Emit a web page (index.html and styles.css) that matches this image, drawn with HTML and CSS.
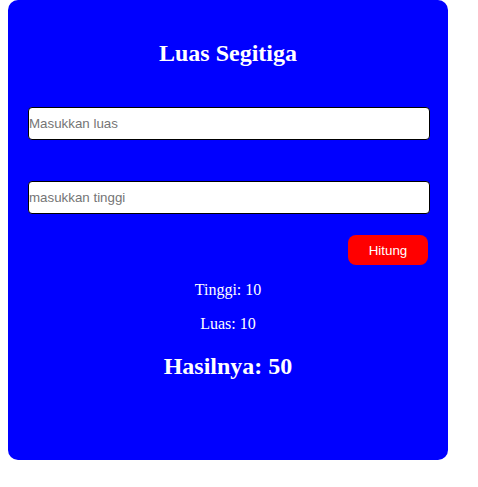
FILE: index.html
```html
<!DOCTYPE html>
<html lang="en">
<head>
    <meta charset="UTF-8">
    <meta name="viewport" content="width=device-width, initial-scale=1.0">
    <title>Luas Segitiga</title>
    <link rel="stylesheet" href="styles.css">
</head>
<body>
    <div class="card">
        <h2>Luas Segitiga</h2>
        <input type="text" class="field field-luas" placeholder="Masukkan luas">
        <input type="text" class="field field-tinggi" placeholder="masukkan tinggi">
        <div class="actions">
            <button type="button">Hitung</button>
        </div>
        <p>Tinggi: 10</p>
        <p>Luas: 10</p>
        <h2>Hasilnya: 50</h2>
    </div>
</body>
</html>
```
FILE: styles.css
```css
body {
    margin: 0 8px;
    font-family: "Liberation Serif", "Times New Roman", serif;
}
.card {
    width: 400px;
    padding: 20px 20px 60px;
    background-color: #0000ff;
    color: white;
    text-align: center;
    border-radius: 10px;
}
.card h2 {
    font-size: 24px;
    margin: 20px 0;
}
.card p {
    font-size: 16px;
    margin: 16px 0;
}
.field {
    display: block;
    width: 100%;
    height: 31px;
    padding: 0;
    border: 1px solid black;
    border-radius: 4px;
    background-color: white;
    font-family: "Liberation Sans", Arial, sans-serif;
    font-size: 13.33px;
}
.field::placeholder {
    color: #757575;
}
.field-luas {
    margin-top: 40px;
}
.field-tinggi {
    margin-top: 41px;
}
.actions {
    display: flex;
    justify-content: flex-end;
    margin-top: 21px;
}
.actions button {
    width: 80px;
    height: 30px;
    border: none;
    border-radius: 8px;
    background-color: red;
    color: white;
    font-family: "Liberation Sans", Arial, sans-serif;
    font-size: 13.33px;
}
```
